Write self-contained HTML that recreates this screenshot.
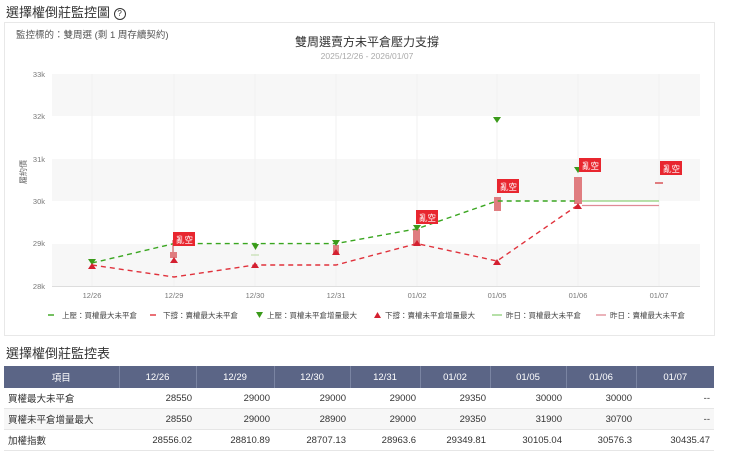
<!DOCTYPE html>
<html><head><meta charset="utf-8"><style>
body{margin:0;width:740px;height:450px;overflow:hidden;background:#fff;font-family:"Liberation Sans","Noto Sans CJK TC",sans-serif;color:#333}
.h{position:absolute;font-size:13px;color:#333}
table{position:absolute;left:4px;top:366px;width:710px;border-collapse:collapse;font-size:9.5px;table-layout:fixed}
th{background:#5b6586;color:#fff;font-weight:normal;height:22px;border-right:1px solid #7a84a2;text-align:center;padding:0}
td{height:20px;border-bottom:1px solid #e6e6e6;text-align:right;padding:0 4px;color:#333}
td:first-child{text-align:left}
tr:nth-child(odd) td{background:#f7f7f7}
</style></head><body>
<div class="h" style="left:6px;top:2px">選擇權倒莊監控圖 <span style="display:inline-block;width:10px;height:10px;border:1.3px solid #333;border-radius:50%;font-size:8px;text-align:center;line-height:10px;vertical-align:1px">?</span></div>
<div style="position:absolute;left:4px;top:22px;width:709px;height:312px;border:1px solid #e8e8e8"></div>
<svg width="740" height="450" style="position:absolute;left:0;top:0" font-family="Liberation Sans,Noto Sans CJK TC,sans-serif">
<text x="16" y="38" font-size="9.5" fill="#555">監控標的：雙周選 (剩 1 周存續契約)</text>
<text x="367" y="46" font-size="12" fill="#333" text-anchor="middle">雙周選賣方未平倉壓力支撐</text>
<text x="367" y="59" font-size="8.5" fill="#aaa" text-anchor="middle">2025/12/26 - 2026/01/07</text>
<rect x="52" y="74" width="648" height="42" fill="#f7f7f7"/>
<rect x="52" y="159" width="648" height="42" fill="#f7f7f7"/>
<rect x="52" y="244" width="648" height="42" fill="#f7f7f7"/>
<g stroke="#f0f0f0" stroke-width="1">
<line x1="92" y1="74" x2="92" y2="286"/><line x1="174" y1="74" x2="174" y2="286"/><line x1="255" y1="74" x2="255" y2="286"/><line x1="336" y1="74" x2="336" y2="286"/><line x1="417" y1="74" x2="417" y2="286"/><line x1="497" y1="74" x2="497" y2="286"/><line x1="578" y1="74" x2="578" y2="286"/><line x1="659" y1="74" x2="659" y2="286"/>
</g>
<line x1="52" y1="286.5" x2="700" y2="286.5" stroke="#ddd"/>
<g font-size="7.5" fill="#777" text-anchor="end">
<text x="45" y="77">33k</text><text x="45" y="119">32k</text><text x="45" y="162">31k</text><text x="45" y="204">30k</text><text x="45" y="246">29k</text><text x="45" y="289">28k</text></g>
<text transform="translate(26,172) rotate(-90)" font-size="8" fill="#666" text-anchor="middle">履約價</text>
<g font-size="7.5" fill="#777" text-anchor="middle">
<text x="92" y="298">12/26</text><text x="174" y="298">12/29</text><text x="255" y="298">12/30</text><text x="336" y="298">12/31</text><text x="417" y="298">01/02</text><text x="497" y="298">01/05</text><text x="578" y="298">01/06</text><text x="659" y="298">01/07</text></g>
<line x1="582" y1="201" x2="659" y2="201" stroke="#8fd07a" stroke-width="1.3"/>
<line x1="582" y1="205.5" x2="659" y2="205.5" stroke="#e08a95" stroke-width="1.3"/>
<g fill="#e07d80">
<rect x="170" y="252" width="7" height="6"/><rect x="333" y="245" width="6" height="10"/><rect x="413" y="229" width="7" height="16"/><rect x="494" y="197" width="7" height="14"/><rect x="574" y="177" width="8" height="27"/><rect x="655" y="182" width="8" height="2"/></g>
<line x1="251" y1="255" x2="259" y2="255" stroke="#b8d8a0"/>
<polyline points="92,263 174,243.6 255,243.6 336,243.6 417,228.8 497,201 578,201" fill="none" stroke="#3aa620" stroke-width="1.4" stroke-dasharray="5,4"/>
<polyline points="92,265 174,277 255,265 336,265 417,243.6 497,261 578,205" fill="none" stroke="#e0323c" stroke-width="1.4" stroke-dasharray="5,4"/>
<g fill="#3a9a1a">
<path d="M88,259h8l-4,6z"/><path d="M252,244h7l-3.5,6z"/><path d="M332,240h8l-4,6z"/><path d="M413,225h8l-4,6z"/><path d="M493,117h8l-4,6z"/><path d="M574,167h8l-4,6z"/></g>
<g fill="#d42030">
<path d="M88,269h8l-4,-6z"/><path d="M170,263h8l-4,-6z"/><path d="M251,268h8l-4,-6z"/><path d="M332,255h8l-4,-6z"/><path d="M413,246h8l-4,-6z"/><path d="M493,265h8l-4,-6z"/><path d="M574,209h8l-4,-6z"/></g>
<g font-size="8.5" fill="#fff">
<line x1="173" y1="240" x2="173" y2="252" stroke="#c44"/><rect x="173" y="232" width="22" height="14" fill="#e8262f"/><text x="176" y="243">亂空</text>
<rect x="416" y="210" width="22" height="14" fill="#e8262f"/><text x="419" y="221">亂空</text>
<rect x="497" y="179" width="22" height="14" fill="#e8262f"/><text x="500" y="190">亂空</text>
<rect x="579" y="158" width="22" height="14" fill="#e8262f"/><text x="582" y="169">亂空</text>
<rect x="660" y="161" width="22" height="14" fill="#e8262f"/><text x="663" y="172">亂空</text></g>
<g font-size="7.5" fill="#444">
<line x1="48" y1="315" x2="54" y2="315" stroke="#3aa620" stroke-width="1.4"/><text x="62" y="318">上壓：買權最大未平倉</text>
<line x1="150" y1="315" x2="156" y2="315" stroke="#e0323c" stroke-width="1.4"/><text x="163" y="318">下撐：賣權最大未平倉</text>
<path d="M256,312h7l-3.5,6z" fill="#3a9a1a"/><text x="267" y="318">上壓：買權未平倉增量最大</text>
<path d="M374,318h7l-3.5,-6z" fill="#d42030"/><text x="385" y="318">下撐：賣權未平倉增量最大</text>
<line x1="492" y1="315" x2="502" y2="315" stroke="#8fd07a" stroke-width="1.3"/><text x="506" y="318">昨日：買權最大未平倉</text>
<line x1="596" y1="315" x2="606" y2="315" stroke="#e08a95" stroke-width="1.3"/><text x="610" y="318">昨日：賣權最大未平倉</text></g>
</svg>
<div class="h" style="left:6px;top:343px;font-size:13px">選擇權倒莊監控表</div>
<table>
<colgroup><col style="width:115px"><col style="width:77px"><col style="width:78px"><col style="width:76px"><col style="width:70px"><col style="width:70px"><col style="width:76px"><col style="width:70px"><col style="width:78px"></colgroup>
<tr><th>項目</th><th>12/26</th><th>12/29</th><th>12/30</th><th>12/31</th><th>01/02</th><th>01/05</th><th>01/06</th><th style="border-right:none">01/07</th></tr>
<tr><td>買權最大未平倉</td><td>28550</td><td>29000</td><td>29000</td><td>29000</td><td>29350</td><td>30000</td><td>30000</td><td>--</td></tr>
<tr><td>買權未平倉增量最大</td><td>28550</td><td>29000</td><td>28900</td><td>29000</td><td>29350</td><td>31900</td><td>30700</td><td>--</td></tr>
<tr><td>加權指數</td><td>28556.02</td><td>28810.89</td><td>28707.13</td><td>28963.6</td><td>29349.81</td><td>30105.04</td><td>30576.3</td><td>30435.47</td></tr>
</table>
</body></html>
